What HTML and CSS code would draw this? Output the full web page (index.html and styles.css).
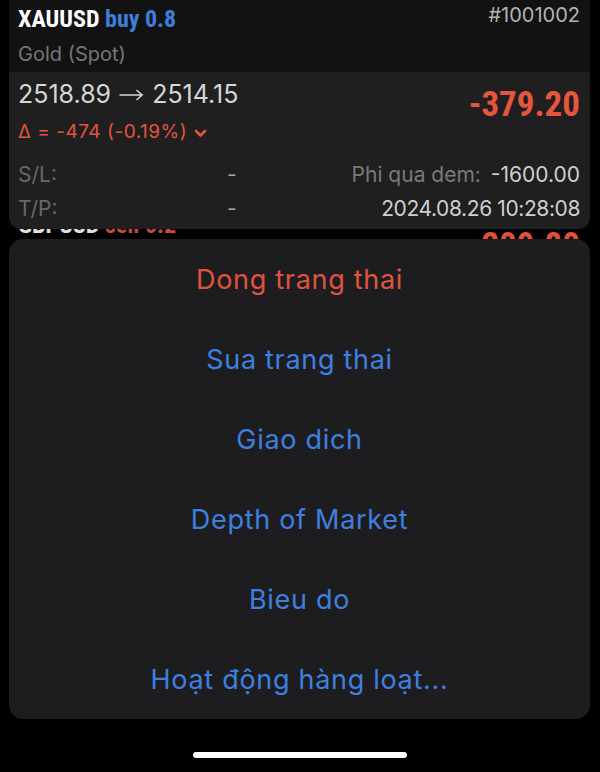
FILE: index.html
```html
<!DOCTYPE html>
<html>
<head>
    <title>Positions</title>
    <link rel="stylesheet" href="styles.css">
</head>
<body>
    <div class="screen">
        <!-- Selected position, lifted above the list -->
        <div class="position">
            <div class="pos-head">
                <div>
                    <div class="symbol-line">
                        <span class="symbol">XAUUSD</span>
                        <span class="side buy">buy 0.8</span>
                    </div>
                    <div class="desc">Gold (Spot)</div>
                </div>
                <div class="ticket">#1001002</div>
            </div>

            <div class="pos-body">
                <div class="price-row">
                    <div>
                        <div class="prices">
                            2518.89
                            <svg class="arrow" width="25" height="12" viewBox="0 0 25 12">
                                <path d="M1 6 H23 M18 1.5 L23.2 6 L18 10.5" fill="none" stroke="currentColor" stroke-width="1.6" stroke-linecap="round" stroke-linejoin="round"/>
                            </svg>
                            2514.15
                        </div>
                        <div class="delta">
                            <span>&Delta; = -474 (-0.19%)</span>
                            <svg class="chevron" width="13" height="9" viewBox="0 0 13 9">
                                <path d="M2 2 L6.5 6.5 L11 2" fill="none" stroke="currentColor" stroke-width="2.6" stroke-linecap="round" stroke-linejoin="round"/>
                            </svg>
                        </div>
                    </div>
                    <div class="profit">-379.20</div>
                </div>

                <div class="details">
                    <span class="label">S/L:</span>
                    <span class="dash">-</span>
                    <span class="right"><span class="label-2">Phi qua dem:</span> <span class="value">-1600.00</span></span>

                    <span class="label">T/P:</span>
                    <span class="dash">-</span>
                    <span class="right"><span class="value date">2024.08.26 10:28:08</span></span>
                </div>
            </div>
        </div>

        <!-- Next row of the list, mostly covered -->
        <div class="peek">
            <div class="peek-title">
                <span class="symbol">GBPUSD</span>
                <span class="side sell">sell 0.2</span>
            </div>
            <div class="peek-profit">-209.80</div>
        </div>

        <!-- Action sheet -->
        <div class="sheet">
            <div class="sheet-item danger">Dong trang thai</div>
            <div class="sheet-item">Sua trang thai</div>
            <div class="sheet-item">Giao dich</div>
            <div class="sheet-item">Depth of Market</div>
            <div class="sheet-item">Bieu do</div>
            <div class="sheet-item">Hoạt động hàng loạt...</div>
        </div>

        <div class="home-bar"></div>
    </div>
</body>
</html>
```

FILE: styles.css
```css
body {
    margin: 0;
    background-color: #000;
    font-family: Inter, "Noto Sans", sans-serif;
    color: #d4d4d4;
}

.screen {
    width: 600px;
    height: 772px;
    padding: 0 10px 0 9px;
    box-sizing: border-box;
    overflow: hidden;
}

/* Lifted position card */
.position {
    background-color: #1f1f20;
    border-radius: 0 0 12px 12px;
    overflow: hidden;
}

.pos-head {
    height: 72px;
    box-sizing: border-box;
    padding: 4px 10px 0 9px;
    background-color: #121212;
    display: flex;
    justify-content: space-between;
}

.symbol-line {
    font-family: "Liberation Sans Narrow", "Roboto Condensed", "DejaVu Sans Condensed", sans-serif;
    font-weight: bold;
    font-size: 24px;
    line-height: 30px;
}

.symbol {
    color: #fff;
}

.side.buy {
    color: #3c7fdc;
}

.side.sell {
    color: #c9483a;
}

.desc {
    margin-top: 7px;
    font-size: 20px;
    line-height: 26px;
    color: #767676;
}

.ticket {
    font-size: 20px;
    line-height: 22px;
    color: #b4b4b4;
}

.pos-body {
    padding: 7px 10px 3px 9px;
}

.price-row {
    display: flex;
    justify-content: space-between;
}

.prices {
    font-size: 25px;
    line-height: 30px;
    color: #d6d6d6;
    display: flex;
    align-items: center;
    gap: 8px;
}

.arrow {
    margin-top: 2px;
}

.delta {
    margin-top: 11px;
    font-size: 19px;
    line-height: 24px;
    letter-spacing: 0.5px;
    color: #e4533f;
    display: flex;
    align-items: center;
    gap: 7px;
}

.chevron {
    margin-top: 2px;
}

.profit {
    margin-top: 8px;
    font-family: "Liberation Sans Narrow", "Roboto Condensed", "DejaVu Sans Condensed", sans-serif;
    font-weight: bold;
    font-size: 35px;
    line-height: 36px;
    color: #e8553f;
}

.details {
    margin-top: 14px;
    display: grid;
    grid-template-columns: 209px 30px 1fr;
    font-size: 21px;
    line-height: 34px;
}

.label {
    color: #686868;
}

.dash {
    color: #a0a0a0;
}

.right {
    text-align: right;
    color: #cfcfcf;
}

.label-2 {
    color: #7a7a7a;
    margin-right: 4px;
}

.date {
    letter-spacing: -0.4px;
}

/* Covered row of the list */
.peek {
    height: 10px;
    overflow: hidden;
    display: flex;
    justify-content: space-between;
    padding: 0 10px 0 9px;
}

.peek-title {
    margin-top: -19px;
    font-family: "Liberation Sans Narrow", "Roboto Condensed", "DejaVu Sans Condensed", sans-serif;
    font-weight: bold;
    font-size: 24px;
    line-height: 30px;
}

.peek-title .symbol {
    color: #e0e0e0;
}

.peek-profit {
    margin-top: -1px;
    font-family: "Liberation Sans Narrow", "Roboto Condensed", "DejaVu Sans Condensed", sans-serif;
    font-weight: bold;
    font-size: 35px;
    line-height: 36px;
    color: #e0503c;
}

/* Action sheet */
.sheet {
    background-color: #1d1d1f;
    border-radius: 14px;
}

.sheet-item {
    height: 80px;
    display: flex;
    align-items: center;
    justify-content: center;
    font-size: 27px;
    letter-spacing: 0.7px;
    color: #3d81e0;
}

.sheet-item.danger {
    color: #e0533f;
}

.home-bar {
    width: 214px;
    height: 6px;
    margin: 33px auto 0;
    border-radius: 3px;
    background-color: #fff;
}
```
